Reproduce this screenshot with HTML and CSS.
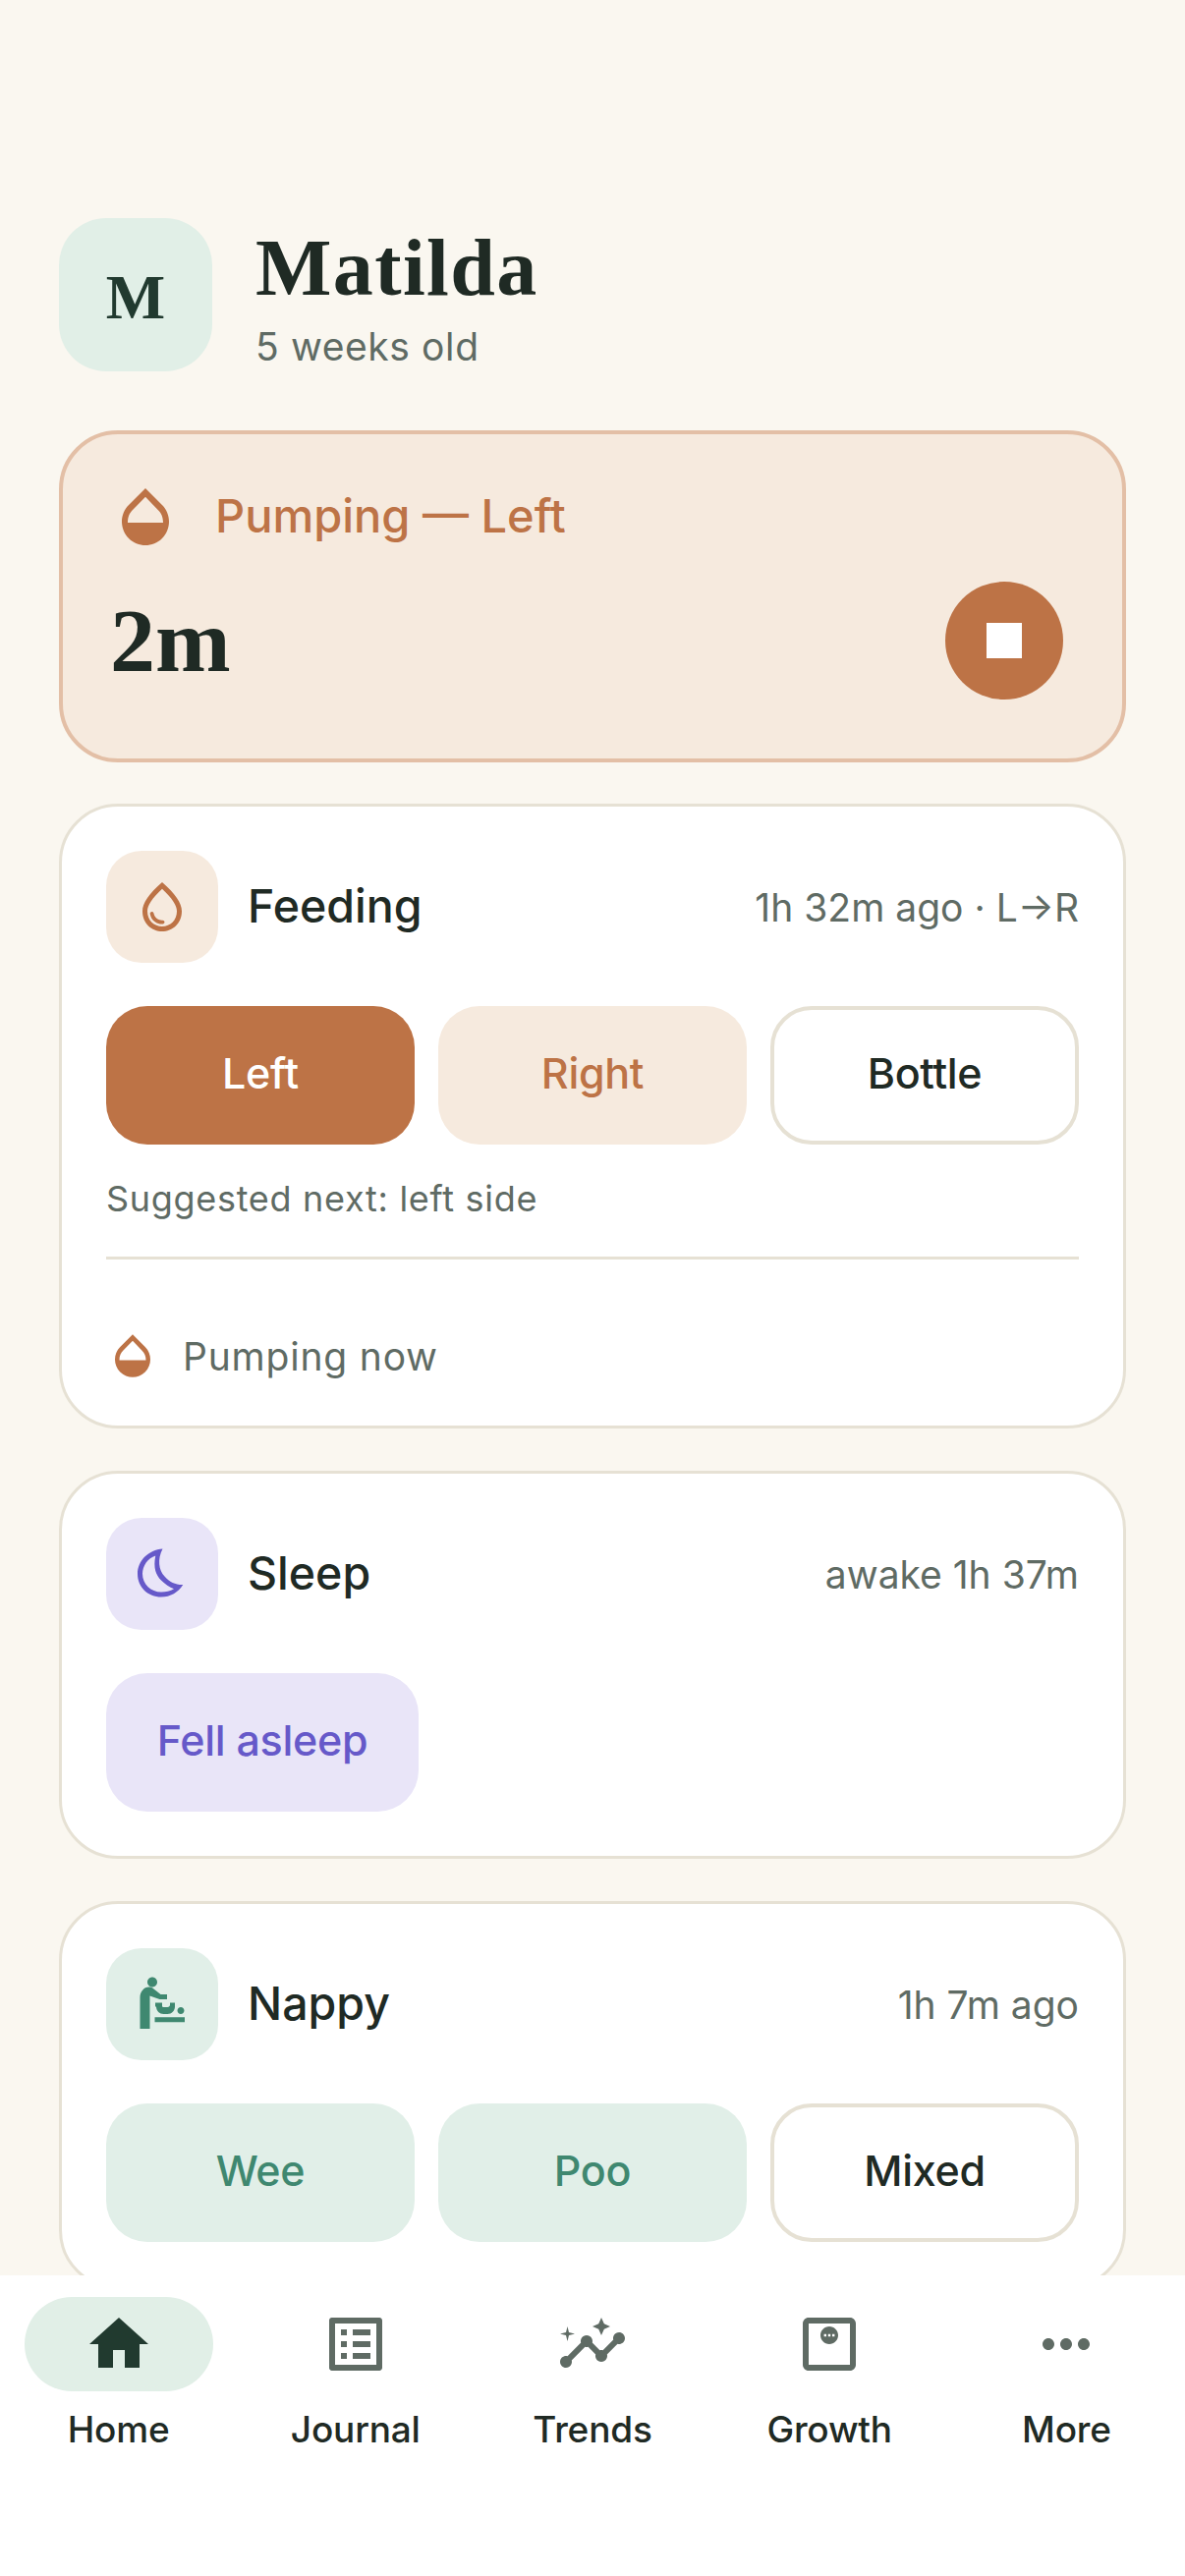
FILE: index.html
```html
<!DOCTYPE html>
<html lang="en">
<head>
<meta charset="utf-8">
<title>Matilda</title>
<link rel="stylesheet" href="styles.css">
</head>
<body>
<div class="app">
  <main class="content">
    <header class="profile">
      <div class="avatar">M</div>
      <div class="profile-text">
        <h1 class="name">Matilda</h1>
        <p class="age">5 weeks old</p>
      </div>
    </header>

    <section class="active">
      <div class="active-head">
        <svg class="ic72 fill-terra" viewBox="0 0 24 24"><path d="M17.66 8L12 2.35 6.34 8C4.78 9.56 4 11.64 4 13.64s.78 4.11 2.34 5.67 3.61 2.35 5.66 2.35 4.1-.79 5.66-2.35S20 15.64 20 13.64 19.22 9.56 17.66 8zM6 14c.01-2 .62-3.27 1.76-4.4L12 5.27l4.24 4.38C17.38 10.77 17.99 12 18 14H6z"/></svg>
        <span class="active-title">Pumping — Left</span>
      </div>
      <div class="active-body">
        <span class="timer">2m</span>
        <button class="stop"><span class="stop-square"></span></button>
      </div>
    </section>

    <section class="card">
      <div class="card-head">
        <div class="tile tile-terra">
          <svg class="ic60 fill-terra" viewBox="0 0 24 24"><path d="M12 2c-5.33 4.55-8 8.48-8 11.8 0 4.98 3.8 8.2 8 8.2s8-3.22 8-8.2c0-3.32-2.67-7.25-8-11.8zm0 18c-3.35 0-6-2.57-6-6.2 0-2.34 1.95-5.44 6-9.14 4.05 3.7 6 6.79 6 9.14 0 3.63-2.65 6.2-6 6.2zm-4.17-6c.37 0 .67.26.74.62.41 2.22 2.28 2.98 3.64 2.87.43-.02.79.32.79.75 0 .4-.32.73-.72.75-2.13.13-4.62-1.09-5.19-4.12-.08-.45.28-.87.74-.87z"/></svg>
        </div>
        <h2 class="card-title">Feeding</h2>
        <span class="card-meta">1h 32m ago · L→R</span>
      </div>
      <div class="btn-row">
        <button class="btn btn-terra-solid">Left</button>
        <button class="btn btn-terra">Right</button>
        <button class="btn btn-outline">Bottle</button>
      </div>
      <p class="hint">Suggested next: left side</p>
      <div class="divider"></div>
      <div class="sub-row">
        <svg class="ic54 fill-terra" viewBox="0 0 24 24"><path d="M17.66 8L12 2.35 6.34 8C4.78 9.56 4 11.64 4 13.64s.78 4.11 2.34 5.67 3.61 2.35 5.66 2.35 4.1-.79 5.66-2.35S20 15.64 20 13.64 19.22 9.56 17.66 8zM6 14c.01-2 .62-3.27 1.76-4.4L12 5.27l4.24 4.38C17.38 10.77 17.99 12 18 14H6z"/></svg>
        <span class="sub-text">Pumping now</span>
      </div>
    </section>

    <section class="card">
      <div class="card-head">
        <div class="tile tile-purple">
          <svg class="ic60 fill-purple" viewBox="0 0 24 24"><path fill-rule="evenodd" d="M12.2 1.8C6.5 2.2 2 6.6 2 12c0 5.5 4.4 9.4 9.6 9.4 3.8 0 7-1.9 8.9-5-2.9.1-5.5-1-7.5-3.4C10.6 10.5 10 6 12.2 1.8zM9.3 4.6c-1 4.9.2 7.9 2.3 10 1.6 1.6 3.4 2.8 5.2 3.5-1.5.9-3.3 1.3-5.2 1.3C7.5 19.4 4 16.2 4 12c0-3.4 2.2-6.3 5.3-7.4z"/></svg>
        </div>
        <h2 class="card-title">Sleep</h2>
        <span class="card-meta">awake 1h 37m</span>
      </div>
      <div class="btn-row">
        <button class="btn btn-purple">Fell asleep</button>
      </div>
    </section>

    <section class="card">
      <div class="card-head">
        <div class="tile tile-green">
          <svg class="ic60 fill-green" viewBox="0 0 24 24"><path d="M14 8v2h-3L7 8.6V22H3V9.2C3 7 4.6 5 6.6 5c.6 0 1 .1 1.5.4L11.4 8zM8 1c-1.1 0-2 .9-2 2s.9 2 2 2 2-.9 2-2-.9-2-2-2zM9 19.3h12.2v-2H9zM19.6 16c.77 0 1.4-.63 1.4-1.4s-.63-1.4-1.4-1.4-1.4.63-1.4 1.4.63 1.4 1.4 1.4zM9.2 11.4H12v1.2c0 .4.3.6.6.6h1.6c.6 0 1-.4 1-1v-.8h2v1.6c0 1.6-1.3 3-3 3h-1.6c-1.6 0-3-1.2-3-3H9.2z"/></svg>
        </div>
        <h2 class="card-title">Nappy</h2>
        <span class="card-meta">1h 7m ago</span>
      </div>
      <div class="btn-row">
        <button class="btn btn-green">Wee</button>
        <button class="btn btn-green">Poo</button>
        <button class="btn btn-outline">Mixed</button>
      </div>
    </section>
  </main>

  <nav class="nav">
    <a class="nav-item is-active">
      <span class="nav-pill"><svg class="ic72 fill-forest" viewBox="0 0 24 24"><path d="M10 20v-6h4v6h5v-8h3L12 3 2 12h3v8z"/></svg></span>
      <span class="nav-label">Home</span>
    </a>
    <a class="nav-item">
      <span class="nav-pill"><svg class="ic72 fill-grey" viewBox="0 0 24 24"><path d="M19 5v14H5V5h14m1.1-2H3.9c-.5 0-.9.4-.9.9v16.2c0 .4.4.9.9.9h16.2c.4 0 .9-.5.9-.9V3.9c0-.5-.5-.9-.9-.9zM11 7h6v2h-6V7zm0 4h6v2h-6v-2zm0 4h6v2h-6zM7 7h2v2H7zm0 4h2v2H7zm0 4h2v2H7z"/></svg></span>
      <span class="nav-label">Journal</span>
    </a>
    <a class="nav-item">
      <span class="nav-pill"><svg class="ic72 fill-grey" viewBox="0 0 24 24"><path d="M21 8c-1.45 0-2.26 1.44-1.93 2.51l-3.55 3.56c-.3-.09-.74-.09-1.04 0l-2.55-2.55C12.27 10.45 11.46 9 10 9c-1.45 0-2.27 1.44-1.93 2.52l-4.56 4.55C2.44 15.74 1 16.55 1 18c0 1.1.9 2 2 2 1.45 0 2.26-1.44 1.93-2.51l4.55-4.56c.3.09.74.09 1.04 0l2.55 2.55C12.73 16.55 13.54 18 15 18c1.45 0 2.27-1.44 1.93-2.52l3.56-3.55C21.56 12.26 23 11.45 23 10c0-1.1-.9-2-2-2z"/><path d="M15 9l.94-2.07L18 6l-2.06-.93L15 3l-.92 2.07L12 6l2.08.93zM3.5 11L4 9l2-.5L4 8l-.5-2L3 8l-2 .5L3 9z"/></svg></span>
      <span class="nav-label">Trends</span>
    </a>
    <a class="nav-item">
      <span class="nav-pill"><svg class="ic72 fill-grey" viewBox="0 0 24 24"><path fill-rule="evenodd" d="M19 3H5c-1.1 0-2 .9-2 2v14c0 1.1.9 2 2 2h14c1.1 0 2-.9 2-2V5c0-1.1-.9-2-2-2zm0 16H5V5h14v14zM12 6c-1.66 0-3 1.34-3 3s1.34 3 3 3 3-1.34 3-3-1.34-3-3-3zM10.2 8.6h.8v.8h-.8zM11.6 8.6h.8v.8h-.8zM13 8.6h.8v.8H13z"/></svg></span>
      <span class="nav-label">Growth</span>
    </a>
    <a class="nav-item">
      <span class="nav-pill"><svg class="ic72 fill-grey" viewBox="0 0 24 24"><path d="M6 10c-1.1 0-2 .9-2 2s.9 2 2 2 2-.9 2-2-.9-2-2-2zm12 0c-1.1 0-2 .9-2 2s.9 2 2 2 2-.9 2-2-.9-2-2-2zm-6 0c-1.1 0-2 .9-2 2s.9 2 2 2 2-.9 2-2-.9-2-2-2z"/></svg></span>
      <span class="nav-label">More</span>
    </a>
  </nav>
</div>
</body>
</html>
```
FILE: styles.css
```css
* { box-sizing: border-box; }
html, body { margin: 0; padding: 0; }
body {
  background: #faf7f0;
  color: #1f2a24;
  font-family: "Inter", "Liberation Sans", sans-serif;
}
button { font-family: inherit; padding: 0; border: 0; }
h1, h2, p { margin: 0; }

.app { width: 1206px; height: 2622px; display: flex; flex-direction: column; overflow: hidden; }
.content { flex: 1; min-height: 0; overflow: hidden; padding: 222px 60px 0; display: flex; flex-direction: column; }

.profile { display: flex; align-items: center; gap: 44px; height: 156px; flex: none; margin-bottom: 60px; }
.avatar {
  width: 156px; height: 156px; border-radius: 48px; background: #e1efe7; color: #213a2f;
  display: flex; align-items: center; justify-content: center;
  font-family: "Liberation Serif", serif; font-weight: 700; font-size: 64px; padding-top: 6px;
}
.profile-text { padding-top: 8px; }
.name { font-family: "Liberation Serif", serif; font-weight: 700; font-size: 82px; line-height: 88px; letter-spacing: 1.4px; color: #1f2a24; }
.age { font-size: 39px; line-height: 52px; color: #5f6b64; margin-top: 10px; letter-spacing: 0.6px; }

.active {
  background: #f6eade; border: 4.5px solid #e3bfa6; border-radius: 60px; height: 338px;
  padding: 48px 60px 60px 48px; margin-bottom: 42px; flex: none;
}
.active-head { display: flex; align-items: center; gap: 35px; margin-bottom: 30px; }
.active-title { font-size: 47px; font-weight: 500; color: #bd7346; padding-bottom: 3px; }
.active-body { display: flex; align-items: center; justify-content: space-between; }
.timer { font-family: "Liberation Serif", serif; font-weight: 700; font-size: 92px; line-height: 120px; color: #1f2a24; }
.stop { width: 120px; height: 120px; border-radius: 50%; background: #bd7346; display: flex; align-items: center; justify-content: center; }
.stop-square { width: 36px; height: 36px; background: #fff; display: block; }

.ic72 { width: 72px; height: 72px; display: block; flex: none; }
.ic60 { width: 60px; height: 60px; display: block; flex: none; }
.ic54 { width: 54px; height: 54px; display: block; flex: none; }
.fill-terra { fill: #bd7346; }
.fill-purple { fill: #6659c9; }
.fill-green { fill: #3f8870; }
.fill-forest { fill: #213a2f; }
.fill-grey { fill: #5f6b64; }

.card { background: #fff; border: 3px solid #e6e1d4; border-radius: 60px; padding: 45px; margin-bottom: 43px; flex: none; }
.card-head { display: flex; align-items: center; margin-bottom: 44px; }
.tile { width: 114px; height: 114px; border-radius: 36px; display: flex; align-items: center; justify-content: center; flex: none; margin-right: 30px; }
.tile-terra { background: #f6eade; }
.tile-purple { background: #e9e5f8; }
.tile-green { background: #e1efe8; }
.card-title { font-size: 46.5px; font-weight: 500; color: #1f2a24; flex: 1; padding-bottom: 3px; }
.card-meta { font-size: 39px; color: #5f6b64; }

.btn-row { display: grid; grid-template-columns: repeat(3, 1fr); gap: 24px; }
.btn { height: 141px; border-radius: 42px; font-size: 43px; font-weight: 500; letter-spacing: -0.3px; padding-bottom: 5px; }
.btn-terra-solid { background: #bd7346; color: #fff; }
.btn-terra { background: #f6eade; color: #bd7346; }
.btn-outline { background: #fff; border: 4.5px solid #e6e1d4; color: #1f2a24; }
.btn-purple { width: 318px; background: #e9e5f8; color: #6659c9; }
.btn-green { background: #e1efe8; color: #3f8870; }

.hint { font-size: 36px; line-height: 50px; color: #5f6b64; margin-top: 30px; letter-spacing: 0.7px; }
.divider { height: 3px; background: #e6e1d4; margin-top: 34px; }
.sub-row { display: flex; align-items: center; gap: 24px; margin-top: 71px; margin-bottom: -1px; height: 54px; }
.sub-text { font-size: 39px; color: #5f6b64; letter-spacing: 0.8px; }

.nav { height: 306px; flex: none; background: #fff; display: grid; grid-template-columns: repeat(5, 1fr); padding: 22px 0 0; }
.nav-item { display: flex; flex-direction: column; align-items: center; }
.nav-pill { width: 192px; height: 96px; border-radius: 48px; display: flex; align-items: center; justify-content: center; }
.is-active .nav-pill { background: #e1efe7; }
.nav-label { font-size: 37px; font-weight: 450; line-height: 48px; margin-top: 15px; color: #1f2a24; letter-spacing: -0.2px; }
```
